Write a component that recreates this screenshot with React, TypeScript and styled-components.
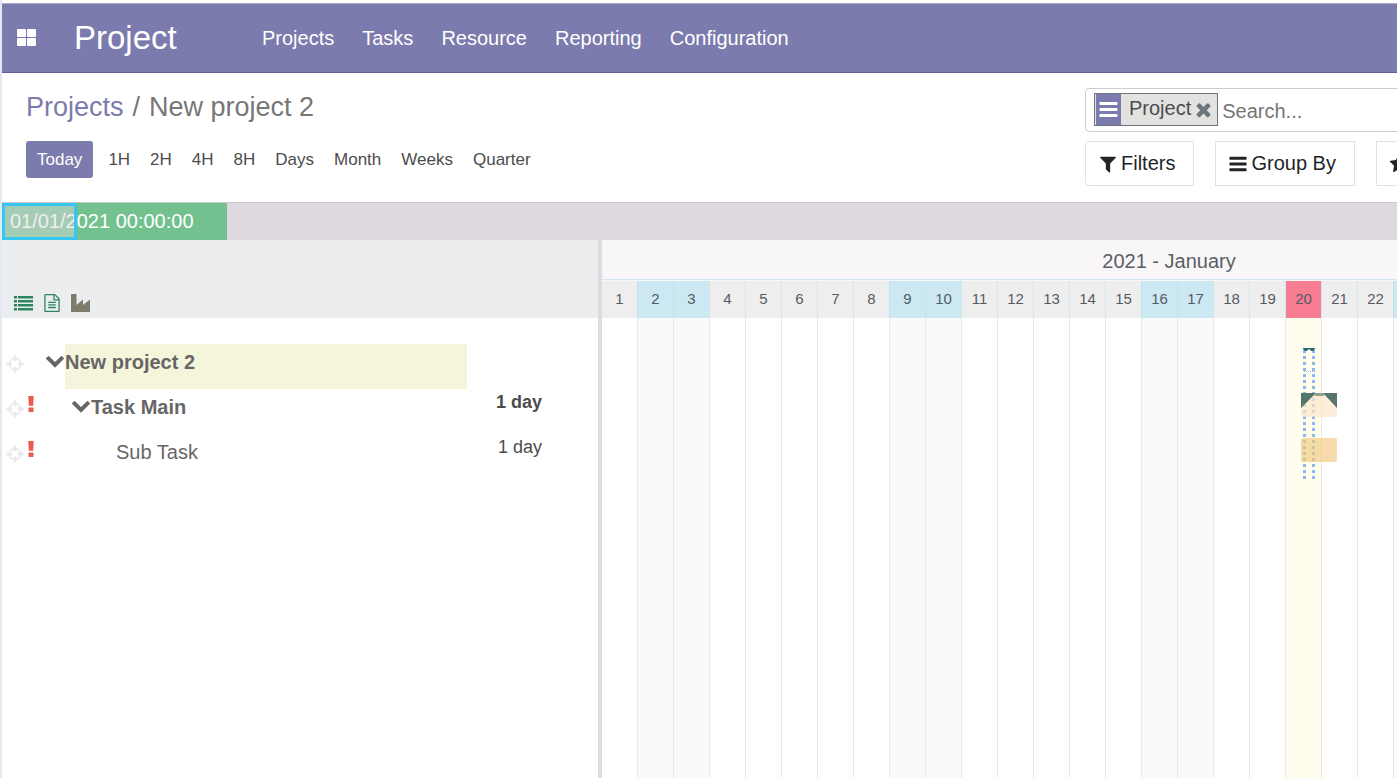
import React, { useEffect, useState } from "react";
import styled, { createGlobalStyle, css } from "styled-components";

const GlobalStyle = createGlobalStyle`
  *, *::before, *::after { box-sizing: border-box; }
  body {
    margin: 0;
    background: #fff;
    font-family: "Liberation Sans", Arial, sans-serif;
    font-size: 20px;
    color: #4c4c4c;
  }
  button, input { font: inherit; color: inherit; }
  a { text-decoration: none; color: inherit; }
  svg { display: block; flex: none; }
`;

const DAY_WIDTH = 36;
const ROW_HEIGHT = 45;
const TASK_PANE_WIDTH = 600;

/* ---------- icons ---------- */

type IconProps = { size: number; children: React.ReactNode };
const Icon = ({ size, children }: IconProps) => (
  <svg width={size} height={size} viewBox="0 0 1792 1792" fill="currentColor" aria-hidden="true">
    {children}
  </svg>
);

const BarsIcon = ({ size }: { size: number }) => (
  <Icon size={size}>
    <path d="M1664 1344v128q0 26-19 45t-45 19h-1408q-26 0-45-19t-19-45v-128q0-26 19-45t45-19h1408q26 0 45 19t19 45zm0-512v128q0 26-19 45t-45 19h-1408q-26 0-45-19t-19-45v-128q0-26 19-45t45-19h1408q26 0 45 19t19 45zm0-512v128q0 26-19 45t-45 19h-1408q-26 0-45-19t-19-45v-128q0-26 19-45t45-19h1408q26 0 45 19t19 45z" />
  </Icon>
);

const TimesIcon = ({ size }: { size: number }) => (
  <Icon size={size}>
    <path d="M1490 1322q0 40-28 68l-136 136q-28 28-68 28t-68-28l-294-294-294 294q-28 28-68 28t-68-28l-136-136q-28-28-28-68t28-68l294-294-294-294q-28-28-28-68t28-68l136-136q28-28 68-28t68 28l294 294 294-294q28-28 68-28t68 28l136 136q28 28 28 68t-28 68l-294 294 294 294q28 28 28 68z" />
  </Icon>
);

const FilterIcon = ({ size }: { size: number }) => (
  <Icon size={size}>
    <path d="M1595 295q17 41-14 70l-493 493v742q0 42-39 59-13 5-25 5-27 0-45-19l-256-256q-19-19-19-45v-486l-493-493q-31-29-14-70 17-39 59-39h1280q42 0 59 39z" />
  </Icon>
);

const StarIcon = ({ size }: { size: number }) => (
  <Icon size={size}>
    <path d="M1728 647q0 22-26 48l-363 354 86 500q1 7 1 20 0 21-10.500 35.500t-30.500 14.500q-19 0-40-12l-449-236-449 236q-22 12-40 12-21 0-31.500-14.500t-10.500-35.500q0-6 2-20l86-500-364-354q-25-27-25-48 0-37 56-46l502-73 225-455q19-41 49-41t49 41l225 455 502 73q56 9 56 46z" />
  </Icon>
);

const ChevronIcon = ({ size }: { size: number }) => (
  <Icon size={size}>
    <path d="M1683 808l-742 741q-19 19-45 19t-45-19l-742-741q-19-19-19-45.500t19-45.500l166-165q19-19 45-19t45 19l531 531 531-531q19-19 45-19t45 19l166 165q19 19 19 45.500t-19 45.500z" />
  </Icon>
);

const CrosshairIcon = ({ size }: { size: number }) => (
  <Icon size={size}>
    <path d="M1325 1024h-109q-26 0-45-19t-19-45v-128q0-26 19-45t45-19h109q-32-108-112.500-188.500t-188.500-112.500v109q0 26-19 45t-45 19h-128q-26 0-45-19t-19-45v-109q-108 32-188.500 112.500t-112.500 188.500h109q26 0 45 19t19 45v128q0 26-19 45t-45 19h-109q32 108 112.500 188.500t188.500 112.500v-109q0-26 19-45t45-19h128q26 0 45 19t19 45v109q108-32 188.500-112.500t112.500-188.500zm339-192v128q0 26-19 45t-45 19h-143q-37 161-154.500 278.500t-278.500 154.500v143q0 26-19 45t-45 19h-128q-26 0-45-19t-19-45v-143q-161-37-278.500-154.500t-154.500-278.500h-143q-26 0-45-19t-19-45v-128q0-26 19-45t45-19h143q37-161 154.500-278.500t278.500-154.500v-143q0-26 19-45t45-19h128q26 0 45 19t19 45v143q161 37 278.500 154.500t154.500 278.500h143q26 0 45 19t19 45z" />
  </Icon>
);

const FileIcon = ({ size }: { size: number }) => (
  <Icon size={size}>
    <path d="M1596 380q28 28 48 76t20 88v1152q0 40-28 68t-68 28h-1344q-40 0-68-28t-28-68v-1600q0-40 28-68t68-28h896q40 0 88 20t76 48zm-444-244v376h376q-10-29-22-41l-313-313q-12-12-41-22zm384 1528v-1024h-416q-40 0-68-28t-28-68v-416h-768v1536h1280zm-1024-864q0-14 9-23t23-9h704q14 0 23 9t9 23v64q0 14-9 23t-23 9h-704q-14 0-23-9t-9-23v-64zm736 224q14 0 23 9t9 23v64q0 14-9 23t-23 9h-704q-14 0-23-9t-9-23v-64q0-14 9-23t23-9h704zm0 256q14 0 23 9t9 23v64q0 14-9 23t-23 9h-704q-14 0-23-9t-9-23v-64q0-14 9-23t23-9h704z" />
  </Icon>
);

const AppsIcon = () => (
  <svg width="20" height="17" viewBox="0 0 20 17" fill="currentColor" aria-hidden="true">
    <rect x="0" y="0" width="9" height="8" rx="1" />
    <rect x="10" y="0" width="9" height="8" rx="1" />
    <rect x="0" y="9" width="9" height="8" rx="1" />
    <rect x="10" y="9" width="9" height="8" rx="1" />
  </svg>
);

const ListIcon = () => (
  <svg width="19" height="16" viewBox="0 0 19 16" fill="currentColor" aria-hidden="true">
    {[1, 5, 9, 13].map((y) => (
      <g key={y}>
        <rect x="0" y={y} width="3" height="2.500" />
        <rect x="4" y={y} width="15" height="2.500" />
      </g>
    ))}
  </svg>
);

const IndustryIcon = () => (
  <svg width="19" height="18" viewBox="0 0 19 18" fill="currentColor" aria-hidden="true">
    <path d="M0 .5q0-.5.5-.5h4.500q.5 0 .5.500v10.500l6.500-5.500v5.500l7-5.500v12q0 .5-.5.500h-18q-.5 0-.5-.5z" />
  </svg>
);

const ExclamationIcon = () => (
  <svg width="6" height="16" viewBox="0 0 6 16" fill="currentColor" aria-hidden="true">
    <path d="M.3 0h5.400l-.5 9.800h-4.400z" />
    <rect x=".5" y="11.500" width="5" height="4.500" rx=".8" />
  </svg>
);

/* ---------- page and top bar ---------- */

const Page = styled.div`
  display: flex;
  flex-direction: column;
  min-height: 100vh;
  padding-top: 3px;
  border-left: 2px solid #e1eaf3;
  overflow: hidden;
`;

const TopBar = styled.header`
  display: flex;
  align-items: center;
  height: 70px;
  padding-left: 15px;
  background: #7c7bad;
  border-top: 1px solid #aaaacb;
  border-bottom: 1px solid #5f5e97;
  color: #fff;
`;

const AppsButton = styled.button`
  display: flex;
  padding: 0 0 2px;
  border: 0;
  background: none;
  cursor: pointer;
`;

const Brand = styled.a`
  width: 188px;
  margin-left: 37px;
  font-size: 33px;
  line-height: 38px;
`;

const Menu = styled.nav`
  display: flex;
  gap: 28px;
  line-height: 24px;
`;

/* ---------- control panel ---------- */

const ControlPanel = styled.section`
  display: grid;
  grid-template-columns: minmax(0, 1fr) 312px;
  height: 130px;
  border-bottom: 1px solid #c8c8c8;
`;

const PanelLeft = styled.div`
  padding: 18px 0 0 24px;
`;

const Breadcrumb = styled.nav`
  display: flex;
  gap: 9px;
  font-size: 27px;
  line-height: 32px;
  color: #777;
  a { color: #7c7bad; }
`;

const ScaleBar = styled.div`
  display: flex;
  align-items: center;
  gap: 20px;
  margin-top: 18px;
  font-size: 17px;
  line-height: 20px;
`;

const ScaleButton = styled.button<{ $active?: boolean }>`
  padding: 0;
  border: 0;
  background: none;
  cursor: pointer;
  ${(p) =>
    p.$active &&
    css`
      height: 37px;
      margin-right: -5px;
      padding: 0 11px;
      border-radius: 3px;
      background: #7c7bad;
      color: #fff;
    `}
`;

const PanelRight = styled.div`
  display: flex;
  flex-direction: column;
  gap: 9px;
  padding-top: 15px;
  overflow: hidden;
`;

const SearchBox = styled.div`
  display: flex;
  align-items: center;
  height: 44px;
  padding-left: 8px;
  border: 1px solid #ccc;
  border-right: 0;
  border-radius: 5px 0 0 5px;
`;

const Facet = styled.div`
  display: flex;
  height: 33px;
  margin-bottom: 1px;
  border: 1px solid #6c757d;
  background: #e2e2e0;
`;

const FacetIcon = styled.span`
  display: flex;
  align-items: center;
  justify-content: center;
  width: 26px;
  border-left: 1px solid #e2e2e0;
  background: #7c7bad;
  color: #fff;
`;

const FacetLabel = styled.span`
  padding-left: 8px;
  line-height: 28px;
`;

const FacetRemove = styled.button`
  display: flex;
  align-items: center;
  padding: 0 3px 0 2px;
  border: 0;
  background: none;
  color: #6c757d;
  cursor: pointer;
`;

const SearchInput = styled.input`
  flex: 1;
  min-width: 0;
  padding: 2px 4px 0;
  border: 0;
  outline: 0;
  background: none;
  &::placeholder { color: #757575; opacity: 1; }
`;

const FilterRow = styled.div`
  display: flex;
  gap: 21px;
`;

const FilterButton = styled.button`
  display: flex;
  flex: none;
  align-items: center;
  gap: 3px;
  height: 45px;
  padding: 0 18px 0 12px;
  border: 1px solid #dee2e6;
  background: #fff;
  color: #212529;
  cursor: pointer;
  &:first-child { border-radius: 4px 0 0 4px; }
`;

/* ---------- range strip ---------- */

const RangeStrip = styled.div`
  position: relative;
  height: 37px;
  background: #ddd9df;
`;

const RangeValue = styled.div`
  width: 225px;
  padding-left: 8px;
  background: #73c18f;
  color: #fff;
  line-height: 37px;
`;

const RangeHandle = styled.div`
  position: absolute;
  top: 0;
  left: 0;
  width: 75px;
  height: 37px;
  border: 3px solid #35c6f4;
  background: rgba(221, 217, 223, 0.45);
`;

/* ---------- gantt ---------- */

const Gantt = styled.main`
  display: flex;
  flex: 1;
`;

const TaskPane = styled.section`
  flex: none;
  width: ${TASK_PANE_WIDTH}px;
  border-right: 4px solid #dbdce0;
`;

const TaskTools = styled.div`
  display: flex;
  align-items: flex-end;
  gap: 10px;
  height: 78px;
  padding: 0 0 5px 12px;
  background: #ebedef;
`;

const ToolButton = styled.button<{ $muted?: boolean }>`
  display: flex;
  align-items: center;
  height: 20px;
  padding: 0;
  border: 0;
  background: none;
  color: ${(p) => (p.$muted ? "#7c7b6c" : "#2f8560")};
  cursor: pointer;
`;

const TaskList = styled.ul`
  margin: 26px 0 0;
  padding: 0;
  list-style: none;
`;

const TaskRow = styled.li`
  display: flex;
  height: ${ROW_HEIGHT}px;
`;

const RowMarks = styled.div<{ $indent: number }>`
  display: flex;
  flex: none;
  gap: 3px;
  width: ${(p) => p.$indent}px;
  padding-left: 3px;
`;

const FocusButton = styled.button`
  display: flex;
  padding: 10px 0 0;
  border: 0;
  background: none;
  color: #e9e9e9;
  cursor: pointer;
`;

const Priority = styled.span`
  padding-top: 7px;
  color: #ea5a4f;
`;

const FoldButton = styled.button`
  display: flex;
  flex: none;
  align-items: flex-start;
  width: 20px;
  padding: 6px 0 0;
  border: 0;
  background: none;
  color: #666;
  cursor: pointer;
`;

const TaskName = styled.span<{ $bold?: boolean; $highlight?: boolean }>`
  flex: 1;
  color: #666;
  line-height: 36px;
  font-weight: ${(p) => (p.$bold ? 700 : 400)};
  background: ${(p) => (p.$highlight ? "#f5f5dc" : "none")};
`;

const Duration = styled.span<{ $bold?: boolean }>`
  flex: none;
  width: 131px;
  padding-right: 56px;
  text-align: right;
  font-size: 18px;
  line-height: 26px;
  font-weight: ${(p) => (p.$bold ? 700 : 400)};
`;

const Timeline = styled.section`
  position: relative;
  display: flex;
  flex: 1;
  flex-direction: column;
  min-width: 0;
  overflow: hidden;
  background: #f8f6f7;
`;

const MonthLabel = styled.div`
  flex: none;
  width: 1134px;
  height: 40px;
  margin-bottom: 1px;
  border-bottom: 1px solid #cce8f1;
  line-height: 42px;
  text-align: center;
  color: #5a5f66;
`;

const Days = styled.div`
  display: flex;
  flex: 1;
  margin-left: -1px;
`;

type DayKind = "work" | "weekend" | "today";
const headColor = { work: "#eee", weekend: "#cce8f3", today: "#f87c92" };
const bodyColor = { work: "#fff", weekend: "#f8fafc", today: "#fffeee" };

const DayColumn = styled.div<{ $kind: DayKind }>`
  display: flex;
  flex: none;
  flex-direction: column;
  width: ${DAY_WIDTH}px;
  border-left: 1px solid #e9e9e9;
  background: ${(p) => bodyColor[p.$kind]};
`;

const DayHead = styled.div<{ $kind: DayKind }>`
  height: 37px;
  margin-left: -1px;
  border-left: 1px solid ${(p) => (p.$kind === "weekend" ? "#c4e3ee" : "#d5e7ec")};
  background: ${(p) => headColor[p.$kind]};
  font-size: 15px;
  line-height: 36px;
  text-align: center;
  color: #555b63;
`;

const Bars = styled.svg`
  position: absolute;
  top: 104px;
  left: 699px;
`;

const scales = ["1H", "2H", "4H", "8H", "Days", "Month", "Weeks", "Quarter"];
const menus = ["Projects", "Tasks", "Resource", "Reporting", "Configuration"];

type Task = { name: string; indent: number; priority?: boolean; foldable?: boolean; highlight?: boolean; duration?: string };
const tasks: Task[] = [
  { name: "New project 2", indent: 43, foldable: true, highlight: true },
  { name: "Task Main", indent: 69, priority: true, foldable: true, duration: "1 day" },
  { name: "Sub Task", indent: 114, priority: true, duration: "1 day" },
];

const DAYS_IN_MONTH = 31;
const kindOf = (day: number): DayKind =>
  day === 20 ? "today" : day % 7 === 2 || day % 7 === 3 ? "weekend" : "work";

/* Number of day columns that fit beside the task pane, whole and partial. */
const useVisibleDays = () => {
  const measure = () => (window.innerWidth - TASK_PANE_WIDTH) / DAY_WIDTH;
  const [fit, setFit] = useState(measure);
  useEffect(() => {
    const update = () => setFit(measure());
    window.addEventListener("resize", update);
    return () => window.removeEventListener("resize", update);
  }, []);
  return { whole: Math.floor(fit), drawn: Math.min(DAYS_IN_MONTH, Math.ceil(fit)) };
};

const GanttBars = () => (
  <Bars width="36" height="140" viewBox="0 0 36 140" aria-label="Task bars">
    <g stroke="#8ab8f0" strokeWidth="3" strokeDasharray="3 3">
      <path d="M3.500 6v132M12.500 6v132" />
    </g>
    <path d="M3 27.500h11" stroke="#8ab8f0" strokeDasharray="1 1" />
    <path d="M2 4h12v1l-2 2h-2l-1-1.500h-2l-1 1.500h-2l-2-2z" fill="#2e6672" />
    <rect x="0" y="49" width="36" height="24" rx="2" fill="#fbe6cb" fillOpacity=".7" />
    <path d="M0 49h15l-15 15zM22 49h14v15z" fill="#55766b" />
    <rect x="14" y="49" width="9" height="3" fill="#8d9f8e" />
    <rect x="0" y="94" width="36" height="24" rx="2" fill="#f3c77c" fillOpacity=".65" />
  </Bars>
);

export default function App() {
  const { whole, drawn } = useVisibleDays();
  const days = Array.from({ length: drawn }, (_, i) => i + 1);
  return (
    <>
      <GlobalStyle />
      <Page>
        <TopBar>
          <AppsButton aria-label="Applications"><AppsIcon /></AppsButton>
          <Brand href="#">Project</Brand>
          <Menu>
            {menus.map((m) => <a key={m} href="#">{m}</a>)}
          </Menu>
        </TopBar>

        <ControlPanel>
          <PanelLeft>
            <Breadcrumb>
              <a href="#">Projects</a>
              <span>/</span>
              <span>New project 2</span>
            </Breadcrumb>
            <ScaleBar>
              <ScaleButton $active>Today</ScaleButton>
              {scales.map((s) => <ScaleButton key={s}>{s}</ScaleButton>)}
            </ScaleBar>
          </PanelLeft>
          <PanelRight>
            <SearchBox>
              <Facet>
                <FacetIcon><BarsIcon size={21} /></FacetIcon>
                <FacetLabel>Project</FacetLabel>
                <FacetRemove aria-label="Remove filter"><TimesIcon size={21} /></FacetRemove>
              </Facet>
              <SearchInput type="text" placeholder="Search..." aria-label="Search" />
            </SearchBox>
            <FilterRow>
              <FilterButton><FilterIcon size={20} />Filters</FilterButton>
              <FilterButton><BarsIcon size={20} />Group By</FilterButton>
              <FilterButton aria-label="Favorites"><StarIcon size={20} /></FilterButton>
            </FilterRow>
          </PanelRight>
        </ControlPanel>

        <RangeStrip>
          <RangeValue>01/01/2021 00:00:00</RangeValue>
          <RangeHandle />
        </RangeStrip>

        <Gantt>
          <TaskPane>
            <TaskTools>
              <ToolButton aria-label="List"><ListIcon /></ToolButton>
              <ToolButton aria-label="Document"><FileIcon size={18} /></ToolButton>
              <ToolButton $muted aria-label="Industry"><IndustryIcon /></ToolButton>
            </TaskTools>
            <TaskList>
              {tasks.map((t) => (
                <TaskRow key={t.name}>
                  <RowMarks $indent={t.indent}>
                    <FocusButton aria-label={`Focus ${t.name}`}><CrosshairIcon size={20} /></FocusButton>
                    {t.priority && <Priority><ExclamationIcon /></Priority>}
                  </RowMarks>
                  {t.foldable && (
                    <FoldButton aria-label={`Fold ${t.name}`}><ChevronIcon size={20} /></FoldButton>
                  )}
                  <TaskName $bold={t.foldable} $highlight={t.highlight}>{t.name}</TaskName>
                  <Duration $bold={t.foldable}>{t.duration}</Duration>
                </TaskRow>
              ))}
            </TaskList>
          </TaskPane>
          <Timeline>
            <MonthLabel>2021 - January</MonthLabel>
            <Days>
              {days.map((d) => (
                <DayColumn key={d} $kind={kindOf(d)}>
                  <DayHead $kind={kindOf(d)}>{d <= whole && d}</DayHead>
                </DayColumn>
              ))}
            </Days>
            <GanttBars />
          </Timeline>
        </Gantt>
      </Page>
    </>
  );
}
